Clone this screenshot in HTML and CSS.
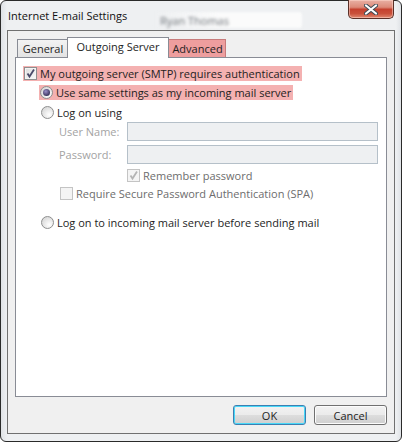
FILE: index.html
```html
<!DOCTYPE html>
<html>
<head>
<meta charset="utf-8">
<link rel="stylesheet" href="styles.css">
</head>
<body>
<div class="window">
  <div class="titlebar">
    <span class="title">Internet E-mail Settings</span>
    <span class="ghost"><span class="ghost-text">Ryan Thomas</span></span>
    <button class="close" aria-label="Close">
      <svg width="14" height="11" viewBox="0 0 14 11"><path d="M2 1.5 L12 9.5 M12 1.5 L2 9.5" stroke="#3a4a55" stroke-width="4" stroke-linecap="round"/><path d="M2 1.5 L12 9.5 M12 1.5 L2 9.5" stroke="#ffffff" stroke-width="2.2" stroke-linecap="round"/></svg>
    </button>
  </div>
  <div class="client">
    <div class="tabs">
      <div class="tab t-general">General</div>
      <div class="tab active">Outgoing Server</div>
      <div class="tab marked">Advanced</div>
    </div>
    <div class="panel">
      <div class="row r1">
        <span class="hl hl1">
          <span class="check">
            <svg width="11" height="11" viewBox="0 0 11 11"><path d="M2.5 5.5 L4.5 8.5 L9 1.5" fill="none" stroke="#4a4a6a" stroke-width="1.8"/></svg>
          </span>
          <span class="lbl">My outgoing server (SMTP) requires authentication</span>
        </span>
      </div>
      <div class="row r2">
        <span class="hl hl2">
          <span class="radio on"><span class="dot"></span></span>
          <span class="lbl">Use same settings as my incoming mail server</span>
        </span>
      </div>
      <div class="row r3">
        <span class="radio"></span>
        <span class="lbl">Log on using</span>
      </div>
      <div class="row r4">
        <span class="flabel">User Name:</span>
        <span class="input"></span>
      </div>
      <div class="row r5">
        <span class="flabel">Password:</span>
        <span class="input"></span>
      </div>
      <div class="row r6">
        <span class="check disabled">
          <svg width="11" height="11" viewBox="0 0 11 11"><path d="M2.5 5.5 L4.5 8.5 L9 1.5" fill="none" stroke="#b4b4b4" stroke-width="1.8"/></svg>
        </span>
        <span class="lbl dim">Remember password</span>
      </div>
      <div class="row r7">
        <span class="check disabled"></span>
        <span class="lbl dim">Require Secure Password Authentication (SPA)</span>
      </div>
      <div class="row r8">
        <span class="radio"></span>
        <span class="lbl">Log on to incoming mail server before sending mail</span>
      </div>
    </div>
    <div class="footer">
      <button class="btn default">OK</button>
      <button class="btn">Cancel</button>
    </div>
  </div>
</div>
</body>
</html>
```

FILE: styles.css
```css
html, body {
  margin: 0;
  padding: 0;
  background: #ffffff;
}
body {
  width: 402px;
  height: 442px;
  overflow: hidden;
  font-family: "Open Sans", "Noto Sans", "DejaVu Sans", sans-serif;
  font-size: 11px;
  color: #1e1e1e;
}
.window {
  width: 402px;
  height: 442px;
  box-sizing: border-box;
  border: 1px solid #2a2a2a;
  border-radius: 6px;
  background: linear-gradient(90deg, #dfe2e6 0px, #eef0f2 6px, #eef0f2 395px, #dfe2e6 400px);
  padding: 0 6px 7px 6px;
  display: flex;
  flex-direction: column;
}
.titlebar {
  height: 29px;
  display: flex;
  align-items: flex-start;
  position: relative;
}
.title {
  margin-top: 7px;
  margin-left: 1px;
  font-size: 11px;
  color: #111;
  position: relative;
  z-index: 2;
}
.ghost {
  position: absolute;
  left: 145px;
  top: 11px;
  width: 150px;
  height: 16px;
  border-radius: 3px;
  background: linear-gradient(90deg, rgba(240,242,244,0) 0%, rgba(252,252,252,0.9) 45%, rgba(252,252,252,0.9) 100%);
  filter: blur(1px);
}
.ghost-text {
  display: block;
  margin: 1px 0 0 8px;
  font-size: 11px;
  color: #6a6f75;
  filter: blur(1.3px);
}
.close {
  margin-left: auto;
  margin-right: 1px;
  width: 46px;
  height: 19px;
  margin-top: -1px;
  padding: 0;
  border: 1px solid #5a3028;
  border-top: none;
  border-radius: 0 0 5px 5px;
  background: linear-gradient(180deg, #e9b0a4 0%, #dc8a79 40%, #c5412f 52%, #c9503a 75%, #e08870 100%);
  box-shadow: inset 0 0 0 1px rgba(255,220,210,0.5);
  display: flex;
  align-items: center;
  justify-content: center;
  position: relative;
  z-index: 2;
}
.close svg { display: block; margin-top: 1px; }
.client {
  flex: 1;
  border: 1px solid #707070;
  background: #f0f0f0;
  padding: 6px 7px 0 7px;
  display: flex;
  flex-direction: column;
}
.tabs {
  height: 20px;
  display: flex;
  align-items: flex-end;
  padding-left: 2px;
  position: relative;
  z-index: 2;
}
.tab {
  height: 18px;
  box-sizing: border-box;
  border: 1px solid #898c95;
  border-bottom: none;
  background: linear-gradient(180deg, #f3f3f3, #e3e3e3);
  line-height: 18px;
  text-align: center;
  font-size: 11px;
  color: #1e1e1e;
  white-space: nowrap;
}
.t-general { width: 52px; }
.tab.active {
  width: 102px;
  height: 21px;
  margin-bottom: -1px;
  background: #ffffff;
  line-height: 18px;
  margin-left: -2px;
  position: relative;
  z-index: 2;
}
.tab.marked {
  width: 59px;
  margin-left: -2px;
  background: #ee9e9e;
  border-color: #c77b7b;
  height: 18px;
  padding-left: 2px;
}
.panel {
  height: 340px;
  box-sizing: border-box;
  border: 1px solid #898c95;
  background: #ffffff;
  padding-top: 8px;
  display: flex;
  flex-direction: column;
  align-items: flex-start;
}
.row {
  display: flex;
  align-items: center;
}
.hl {
  display: flex;
  align-items: center;
  background: #f4b1b1;
  height: 15px;
  padding-right: 2px;
}
.hl1 { padding-left: 1px; }
.hl2 { padding-left: 1px; }
.lbl { white-space: nowrap; font-size: 11px; line-height: 15px; }
.check {
  width: 13px;
  height: 13px;
  box-sizing: border-box;
  border: 1px solid #8e8f8f;
  background: linear-gradient(135deg, #dcdcdc, #fafafa);
  box-shadow: inset 0 0 0 1px #f4f4f4;
  display: flex;
  align-items: center;
  justify-content: center;
  flex: none;
}
.check svg { display: block; }
.check.disabled {
  border-color: #c4c4c4;
  background: #f4f4f4;
}
.check + .lbl { margin-left: 3px; }
.radio {
  width: 13px;
  height: 13px;
  box-sizing: border-box;
  border-radius: 50%;
  border: 1px solid #8e8f8f;
  background: radial-gradient(circle at 65% 70%, #ffffff 0%, #e4e4e4 55%, #cfcfcf 100%);
  display: flex;
  align-items: center;
  justify-content: center;
  flex: none;
}
.radio .dot {
  width: 7px;
  height: 7px;
  border-radius: 50%;
  background: radial-gradient(circle at 40% 35%, #9a8fc8 0%, #3d3760 70%, #2b2848 100%);
}
.radio + .lbl { margin-left: 3px; }
.r1 { margin-left: 7px; }
.r2 { margin-top: 4px; margin-left: 23px; }
.r3 { margin-top: 5px; margin-left: 25px; height: 14px; }
.r4 { margin-top: 3px; margin-left: 43px; }
.r5 { margin-top: 4px; margin-left: 43px; }
.r6 { margin-top: 4px; margin-left: 111px; height: 14px; }
.r7 { margin-top: 4px; margin-left: 44px; height: 14px; }
.r8 { margin-top: 15px; margin-left: 25px; height: 14px; }
.flabel {
  width: 68px;
  font-size: 11px;
  color: #a3a3a3;
  white-space: nowrap;
}
.input {
  width: 251px;
  height: 19px;
  box-sizing: border-box;
  border: 1px solid #b5c0c9;
  background: #eef0f2;
}
.lbl.dim { color: #6d6d6d; }
.footer {
  display: flex;
  justify-content: flex-end;
  gap: 8px;
  padding: 8px 0 0 0;
}
.btn {
  width: 73px;
  height: 20px;
  box-sizing: border-box;
  border: 1px solid #707070;
  border-radius: 3px;
  background: linear-gradient(180deg, #f2f2f2 0%, #ebebeb 50%, #dddddd 51%, #cfcfcf 100%);
  box-shadow: inset 0 0 0 1px #fcfcfc;
  font-family: "Open Sans", "Noto Sans", sans-serif;
  font-size: 11px;
  color: #1e1e1e;
  padding: 0;
  line-height: 17px;
}
.btn.default {
  border-color: #3c7fb1;
  box-shadow: inset 0 0 0 1px #48d8f8;
}
```
